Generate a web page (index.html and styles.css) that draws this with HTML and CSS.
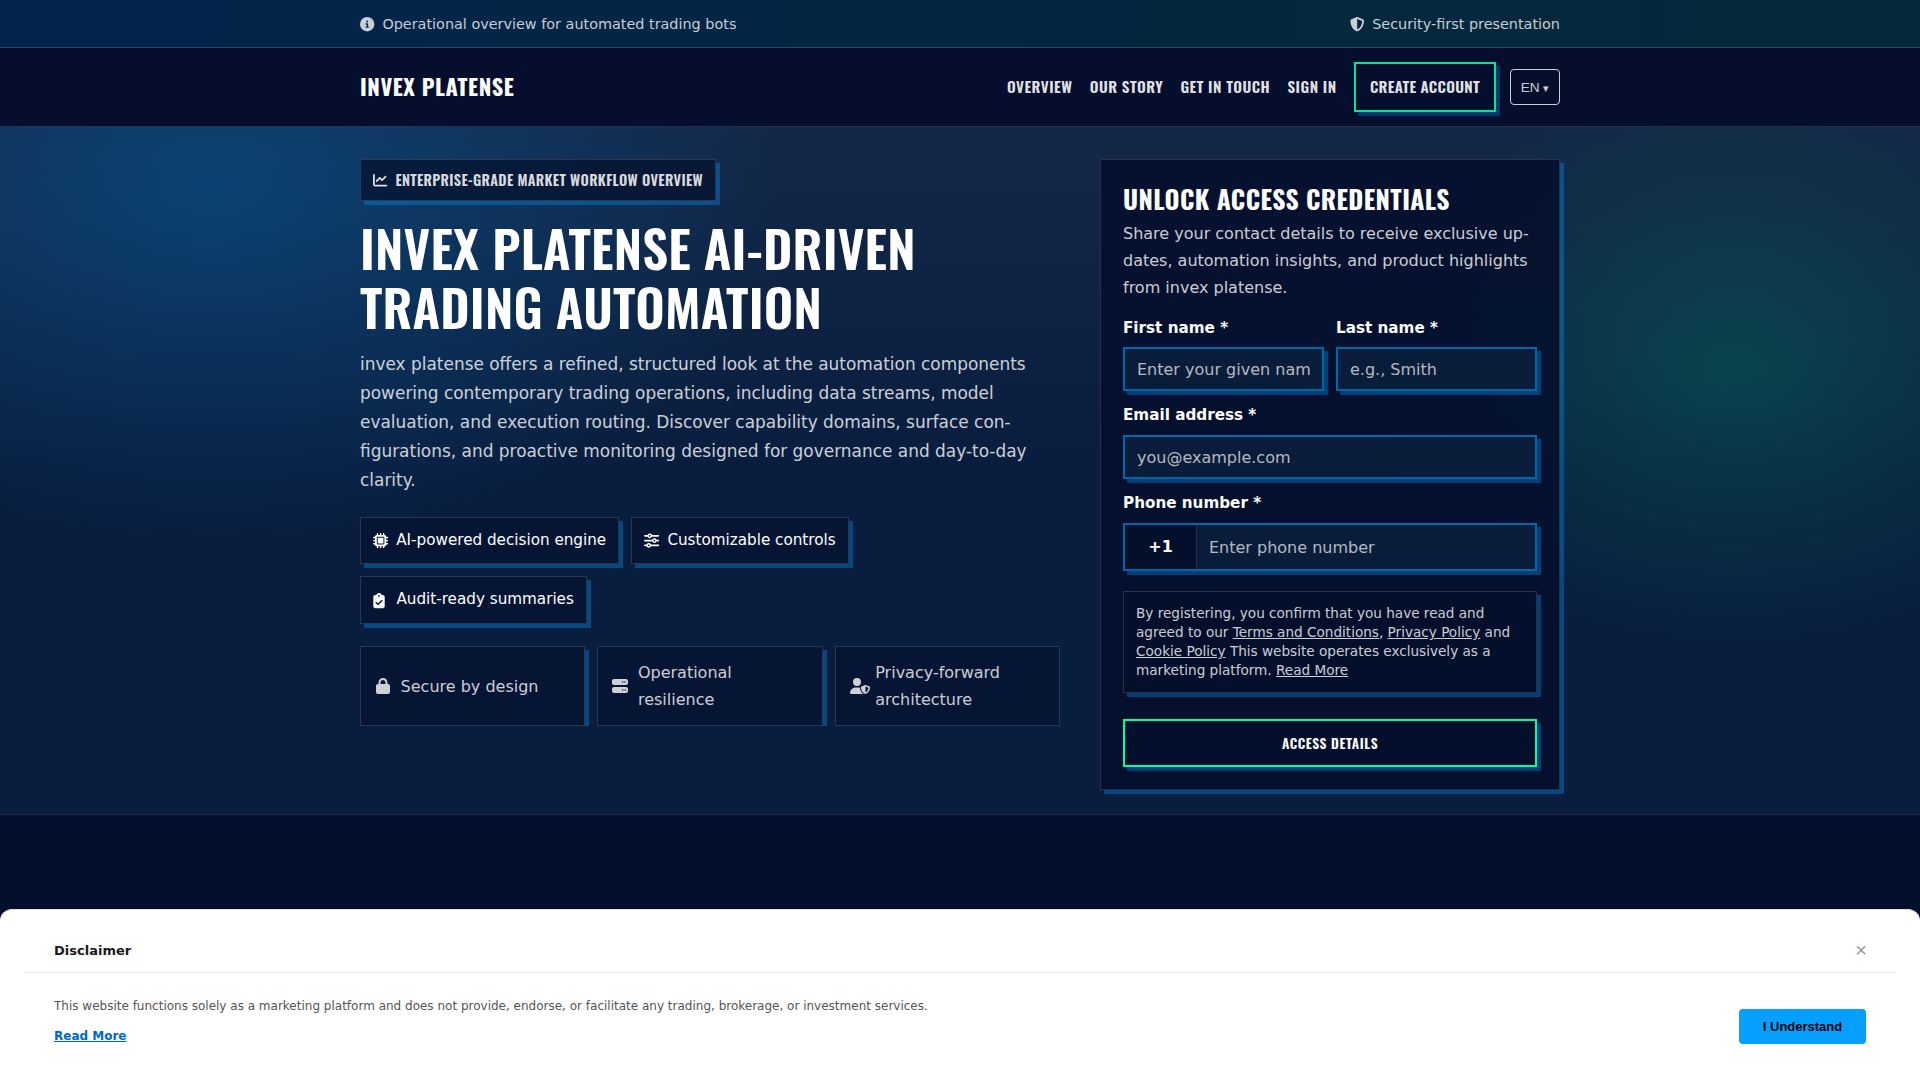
FILE: index.html
```html
<!DOCTYPE html>
<html lang="en">
<head>
<meta charset="utf-8">
<title>Invex Platense</title>
<link rel="stylesheet" href="styles.css">
</head>
<body>
<div class="topbar">
  <div class="container topbar-row">
    <span class="topbar-item">
      <svg class="icon" viewBox="0 0 512 512"><path d="M256 512A256 256 0 1 0 256 0a256 256 0 1 0 0 512zM216 336h24V272H216c-13.300 0-24-10.700-24-24s10.700-24 24-24h48c13.300 0 24 10.700 24 24v88h8c13.300 0 24 10.700 24 24s-10.700 24-24 24H216c-13.300 0-24-10.700-24-24s10.700-24 24-24zm40-208a32 32 0 1 1 0 64 32 32 0 1 1 0-64z"/></svg>
      Operational overview for automated trading bots
    </span>
    <span class="topbar-item">
      <svg class="icon" viewBox="0 0 512 512"><path d="M256 0c4.600 0 9.200 1 13.400 2.900L457.700 82.800c22 9.300 38.400 31 38.300 57.200c-.5 99.200-41.300 280.700-213.600 363.200c-16.700 8-36.100 8-52.800 0C57.300 420.700 16.500 239.200 16 140c-.1-26.200 16.300-47.900 38.300-57.200L242.700 2.900C246.800 1 251.400 0 256 0zm0 66.800V444.800C394 378 431.100 230.100 432 141.400L256 66.800z"/></svg>
      Security-first presentation
    </span>
  </div>
</div>

<header class="header">
  <div class="container header-row">
    <a class="logo">INVEX PLATENSE</a>
    <nav class="nav">
      <a>Overview</a>
      <a>Our story</a>
      <a>Get in touch</a>
      <a>Sign in</a>
      <a class="nav-cta">Create account</a>
    </nav>
    <button class="lang">EN <span class="lang-caret">▾</span></button>
  </div>
</header>

<section class="hero">
  <div class="container hero-grid">
    <div class="hero-copy">
      <div class="badge">
        <svg class="icon" viewBox="0 0 512 512"><path d="M64 64c0-17.700-14.300-32-32-32S0 46.300 0 64V400c0 44.200 35.800 80 80 80H480c17.700 0 32-14.300 32-32s-14.300-32-32-32H80c-8.800 0-16-7.200-16-16V64zm406.600 86.600c12.500-12.500 12.500-32.800 0-45.300s-32.800-12.500-45.300 0L320 210.700l-57.400-57.400c-12.500-12.500-32.800-12.500-45.300 0l-112 112c-12.500 12.500-12.500 32.800 0 45.300s32.800 12.500 45.300 0L240 221.300l57.400 57.400c12.500 12.500 32.800 12.500 45.300 0l128-128z"/></svg>
        <span>Enterprise-grade market workflow overview</span>
      </div>
      <h1 class="hero-title">Invex Platense AI-Driven<br>Trading Automation</h1>
      <p class="hero-text">invex platense offers a refined, structured look at the automation components<br>powering contemporary trading operations, including data streams, model<br>evaluation, and execution routing. Discover capability domains, surface con-<br>figurations, and proactive monitoring designed for governance and day-to-day<br>clarity.</p>
      <div class="chips">
        <span class="chip">
          <svg class="icon" viewBox="0 0 512 512"><path d="M176 24c0-13.300-10.700-24-24-24s-24 10.700-24 24V64c-35.300 0-64 28.700-64 64H24c-13.300 0-24 10.700-24 24s10.700 24 24 24H64v56H24c-13.300 0-24 10.700-24 24s10.700 24 24 24H64v56H24c-13.300 0-24 10.700-24 24s10.700 24 24 24H64c0 35.300 28.700 64 64 64v40c0 13.300 10.700 24 24 24s24-10.700 24-24V448h56v40c0 13.300 10.700 24 24 24s24-10.700 24-24V448h56v40c0 13.300 10.700 24 24 24s24-10.700 24-24V448c35.300 0 64-28.700 64-64h40c13.300 0 24-10.700 24-24s-10.700-24-24-24H448V280h40c13.300 0 24-10.700 24-24s-10.700-24-24-24H448V176h40c13.300 0 24-10.700 24-24s-10.700-24-24-24H448c0-35.300-28.700-64-64-64V24c0-13.300-10.700-24-24-24s-24 10.700-24 24V64H280V24c0-13.300-10.700-24-24-24s-24 10.700-24 24V64H176V24zM160 128H352c17.700 0 32 14.300 32 32V352c0 17.700-14.300 32-32 32H160c-17.700 0-32-14.300-32-32V160c0-17.700 14.300-32 32-32zm192 32H160V352H352V160z"/></svg>
          AI-powered decision engine
        </span>
        <span class="chip">
          <svg class="icon" viewBox="0 0 512 512"><path d="M0 416c0 17.700 14.300 32 32 32l54.700 0c12.300 28.300 40.500 48 73.300 48s61-19.700 73.300-48L480 448c17.700 0 32-14.300 32-32s-14.300-32-32-32l-246.700 0c-12.300-28.300-40.500-48-73.300-48s-61 19.700-73.300 48L32 384c-17.700 0-32 14.300-32 32zm128 0a32 32 0 1 1 64 0 32 32 0 1 1 -64 0zM320 256a32 32 0 1 1 64 0 32 32 0 1 1 -64 0zm32-80c-32.800 0-61 19.700-73.300 48L32 224c-17.700 0-32 14.300-32 32s14.300 32 32 32l246.700 0c12.300 28.300 40.500 48 73.300 48s61-19.700 73.300-48l54.700 0c17.700 0 32-14.300 32-32s-14.300-32-32-32l-54.700 0c-12.300-28.300-40.500-48-73.300-48zM192 128a32 32 0 1 1 0-64 32 32 0 1 1 0 64zm73.300-64C253 35.700 224.800 16 192 16s-61 19.700-73.300 48L32 64C14.300 64 0 78.300 0 96s14.300 32 32 32l86.700 0c12.300 28.300 40.500 48 73.300 48s61-19.700 73.300-48L480 128c17.700 0 32-14.300 32-32s-14.300-32-32-32L265.300 64z"/></svg>
          Customizable controls
        </span>
        <span class="chip">
          <svg class="icon icon-left" viewBox="0 0 384 512"><path d="M192 0c-41.800 0-77.400 26.700-90.500 64H64C28.700 64 0 92.700 0 128V448c0 35.300 28.700 64 64 64H320c35.300 0 64-28.700 64-64V128c0-35.300-28.700-64-64-64H282.500C269.400 26.700 233.800 0 192 0zm0 64a32 32 0 1 1 0 64 32 32 0 1 1 0-64zM305 273L177 401c-9.400 9.400-24.600 9.400-33.900 0L79 337c-9.400-9.400-9.400-24.600 0-33.900s24.600-9.400 33.900 0l47 47L271 239c9.400-9.400 24.600-9.400 33.900 0s9.400 24.600 0 33.900z"/></svg>
          Audit-ready summaries
        </span>
      </div>
      <div class="tiles">
        <div class="tile">
          <svg class="icon" viewBox="0 0 448 512"><path d="M144 144v48H304V144c0-44.200-35.800-80-80-80s-80 35.800-80 80zM80 192V144C80 64.500 144.500 0 224 0s144 64.500 144 144v48h16c35.300 0 64 28.700 64 64V448c0 35.300-28.700 64-64 64H64c-35.300 0-64-28.700-64-64V256c0-35.300 28.700-64 64-64H80z"/></svg>
          <span>Secure by design</span>
        </div>
        <div class="tile">
          <svg class="icon" viewBox="0 0 512 512"><path d="M64 32C28.700 32 0 60.700 0 96v64c0 35.300 28.700 64 64 64H448c35.300 0 64-28.700 64-64V96c0-35.300-28.700-64-64-64H64zm280 72a24 24 0 1 1 0 48 24 24 0 1 1 0-48zm48 24a24 24 0 1 1 48 0 24 24 0 1 1 -48 0zM64 288c-35.300 0-64 28.700-64 64v64c0 35.300 28.700 64 64 64H448c35.300 0 64-28.700 64-64V352c0-35.300-28.700-64-64-64H64zm280 72a24 24 0 1 1 0 48 24 24 0 1 1 0-48zm56 24a24 24 0 1 1 48 0 24 24 0 1 1 -48 0z"/></svg>
          <span>Operational<br>resilience</span>
        </div>
        <div class="tile">
          <svg class="icon icon-wide" viewBox="0 0 640 512"><path d="M224 256A128 128 0 1 0 224 0a128 128 0 1 0 0 256zm-45.700 48C79.800 304 0 383.800 0 482.300C0 498.700 13.300 512 29.700 512H418.300c1.800 0 3.500-.2 5.300-.5c-76.300-55.100-99.800-141-103.100-200.200c-16.100-4.800-33.100-7.300-50.700-7.300H178.300zm308.800-78.300l-120 48C358 277.400 352 286.200 352 296c0 63.300 25.900 168.800 134.800 214.200c5.900 2.500 12.600 2.500 18.500 0C614.100 464.800 640 359.300 640 296c0-9.800-6-18.600-15.100-22.300l-120-48c-5.700-2.300-12.100-2.300-17.800 0zM591.400 312c-3.900 50.700-27.200 116.700-95.400 149.700V273.800L591.400 312z"/></svg>
          <span>Privacy-forward<br>architecture</span>
        </div>
      </div>
    </div>

    <form class="card">
      <h2 class="card-title">Unlock access credentials</h2>
      <p class="card-text">Share your contact details to receive exclusive up-<br>dates, automation insights, and product highlights<br>from invex platense.</p>
      <div class="fields">
        <label class="field"><span class="label">First name *</span><input class="input" placeholder="Enter your given name"></label>
        <label class="field"><span class="label">Last name *</span><input class="input" placeholder="e.g., Smith"></label>
        <label class="field field-full"><span class="label">Email address *</span><input class="input" placeholder="you@example.com"></label>
        <label class="field field-full"><span class="label">Phone number *</span>
          <span class="phone"><span class="prefix">+1</span><input class="phone-input" placeholder="Enter phone number"></span>
        </label>
      </div>
      <div class="consent">By registering, you confirm that you have read and agreed to our <u>Terms and Conditions</u>, <u>Privacy Policy</u> and <u>Cookie Policy</u> This website operates exclusively as a marketing platform. <u>Read More</u></div>
      <button class="submit" type="button">Access details</button>
    </form>
  </div>
</section>

<aside class="disclaimer">
  <div class="disclaimer-head">
    <strong>Disclaimer</strong>
    <span class="close">×</span>
  </div>
  <div class="disclaimer-body">
    <div>
      <p class="disclaimer-text">This website functions solely as a marketing platform and does not provide, endorse, or facilitate any trading, brokerage, or investment services.</p>
      <a class="disclaimer-link">Read More</a>
    </div>
    <button class="accept">I Understand</button>
  </div>
</aside>
</body>
</html>
```
FILE: styles.css
```css
:root {
  --bg: #040f2c;
  --line: rgba(255, 255, 255, .14);
  --muted: rgba(255, 255, 255, .8);
  --shadow: rgba(0, 153, 255, .35);
  --blue: #0067aa;
  --green: #00ff9d;
}

* { box-sizing: border-box; }

body {
  margin: 0;
  height: 1080px;
  overflow: hidden;
  background: var(--bg);
  color: #fff;
  font: 16px/1.7 "DejaVu Sans", sans-serif;
}

p, h1, h2 { margin: 0; }

.container { width: 1200px; margin: 0 auto; }

.icon { display: block; flex: none; width: 1em; height: 1em; fill: currentColor; fill-rule: evenodd; overflow: visible; }

/* top bar */
.topbar {
  height: 48px;
  border-bottom: 1px solid var(--line);
  background: linear-gradient(90deg, rgba(0, 153, 255, .15), rgba(0, 255, 157, .11));
}
.topbar-row { display: flex; justify-content: space-between; align-items: center; height: 48px; }
.topbar-item { display: flex; align-items: center; gap: 8px; font-size: 14.400px; color: rgba(255, 255, 255, .78); }

/* header */
.header { height: 79px; border-bottom: 1px solid var(--line); background: #050f2d; }
.header-row { display: flex; align-items: center; height: 78px; }
.logo { font: 700 22.400px/1.2 Oswald, sans-serif; letter-spacing: .57px; margin-right: auto; padding-bottom: 2px; }
.nav { display: flex; align-items: center; gap: 17.300px; font: 600 15.200px/1.7 Oswald, sans-serif; letter-spacing: .48px; text-transform: uppercase; color: rgba(255, 255, 255, .9); }
.nav-cta { display: flex; align-items: center; height: 50px; padding: 0 14px; letter-spacing: .3px; border: 2px solid #00e69a; box-shadow: 4px 4px 0 rgba(0, 153, 255, .3); }
.lang { width: 50px; height: 36px; margin-left: 14px; padding: 0; border: 1px solid rgba(255, 255, 255, .8); border-radius: 4px; background: none; color: rgba(255, 255, 255, .8); font: 13.600px "Liberation Sans", sans-serif; }
.lang-caret { font-size: 11px; }

/* hero */
.hero {
  height: 688px;
  padding-top: 32px;
  border-bottom: 1px solid #1c2847;
  background:
    radial-gradient(ellipse 580px 350px at 215px 62px, rgba(0, 120, 200, .34), transparent) no-repeat,
    radial-gradient(ellipse 400px 275px at 1735px 240px, rgba(0, 190, 120, .22), transparent) no-repeat,
    linear-gradient(180deg, rgba(255, 255, 255, .045), transparent 50%) no-repeat,
    #091e3f;
}
.hero-grid { display: grid; grid-template-columns: 700px 460px; gap: 40px; align-items: start; }
.badge {
  display: flex; align-items: center; gap: 8px; width: max-content; height: 42px; padding: 0 12px;
  border: 1px solid var(--line); background: rgba(4, 15, 43, .7); box-shadow: 4px 4px 0 var(--shadow);
  font: 600 14.400px/1.7 Oswald, sans-serif; letter-spacing: .33px; text-transform: uppercase; color: rgba(255, 255, 255, .85);
}
.hero-title { margin-top: 17px; font: 600 51.200px/1.15 Oswald, sans-serif; letter-spacing: .18px; text-transform: uppercase; }
.hero-text { margin-top: 14.600px; font-size: 16.960px; color: var(--muted); white-space: nowrap; }
.chips { display: flex; flex-wrap: wrap; gap: 12px; margin-top: 22.400px; }
.chip {
  display: flex; align-items: center; gap: 8px; height: 47.500px; padding: 0 12px; font-size: 15.200px;
  border: 1px solid var(--line); background: #061534; box-shadow: 4px 4px 0 var(--shadow);
}
.icon-left { margin-top: 2px; width: 12px; margin-right: 3.400px; }
.tiles { display: grid; grid-template-columns: repeat(3, 1fr); gap: 12px; margin-top: 22.500px; overflow: hidden; }
.tile {
  display: flex; align-items: center; gap: 9.600px; height: 80px; padding: 0 14px; color: var(--muted);
  border: 1px solid var(--line); background: #061534; box-shadow: 4px 4px 0 var(--shadow);
}
.icon-wide { width: 20px; margin-right: -4px; }

/* sign-up card */
.card { height: 631px; padding: 22px; border: 1px solid var(--line); background: rgba(4, 14, 44, .85); box-shadow: 4px 4px 0 var(--shadow); }
.card-title { padding-top: 1px; font: 700 25.600px/30px Oswald, sans-serif; letter-spacing: .4px; text-transform: uppercase; }
.card-text { margin-top: 7px; color: var(--muted); white-space: nowrap; }
.fields { display: grid; grid-template-columns: 1fr 1fr; gap: 11px 12px; margin-top: 13.400px; }
.field { display: flex; flex-direction: column; gap: 6px; min-width: 0; }
.field-full { grid-column: span 2; gap: 7px; }
.label { font-size: 15.200px; line-height: 26px; font-weight: 700; }
.input, .phone { width: 100%; height: 44px; border: 2px solid var(--blue); background: #091c3a; box-shadow: 4px 4px 0 rgba(0, 153, 255, .35); }
.input { padding: 1px 12px 0; }
.input, .phone-input { border-radius: 0; font: 16px "DejaVu Sans", sans-serif; color: #fff; outline: 0; }
.input::placeholder, .phone-input::placeholder { color: rgba(255, 255, 255, .7); opacity: 1; }
.phone { display: flex; height: 48px; }
.prefix { width: 72px; flex: none; border-right: 1px solid var(--line); background: #040f2c; font-weight: 700; line-height: 43px; text-align: center; }
.phone-input { flex: 1; min-width: 0; border: 0; padding: 1px 12px 0; background: none; }
.consent { height: 102px; margin-top: 20px; padding: 12px; border: 1px solid var(--line); background: #040f2c; box-shadow: 4px 4px 0 rgba(0, 153, 255, .35); font-size: 13.600px; line-height: 19px; color: var(--muted); }
.submit {
  display: block; width: 100%; height: 48px; margin-top: 26px; padding: 0; border: 2px solid var(--green); background: #040f2c;
  box-shadow: 4px 4px 0 rgba(0, 153, 255, .35); color: #fff; font: 600 13.600px Oswald, sans-serif; letter-spacing: .58px; text-transform: uppercase;
}

/* disclaimer sheet */
.disclaimer {
  position: absolute; left: 0; right: 0; top: 909px; height: 171px; padding: 0 24px;
  border-top: 1px solid #e5e5e5; border-radius: 12px 12px 0 0; background: #fff; color: #1a1a1a;
}
.disclaimer-head { display: flex; justify-content: space-between; align-items: center; height: 63px; padding: 20px 30px 0; border-bottom: 1px solid #e8e8e8; font-size: 13px; }
.close { margin-right: -1px; padding-bottom: 2px; color: #999; font: 20px/1 "Liberation Sans", sans-serif; }
.disclaimer-body { display: flex; justify-content: space-between; padding: 22px 30px 0; font-size: 12px; line-height: 20px; }
.disclaimer-text { margin-top: 1px; color: #555; }
.disclaimer-link { display: block; margin-top: 10px; color: #0066cc; font-weight: 700; text-decoration: underline; }
.accept { width: 127px; height: 35px; margin-top: 14px; padding: 0; border: 0; border-radius: 4px; background: #05a0ff; color: #000; font: 700 13px "Liberation Sans", sans-serif; }
```
